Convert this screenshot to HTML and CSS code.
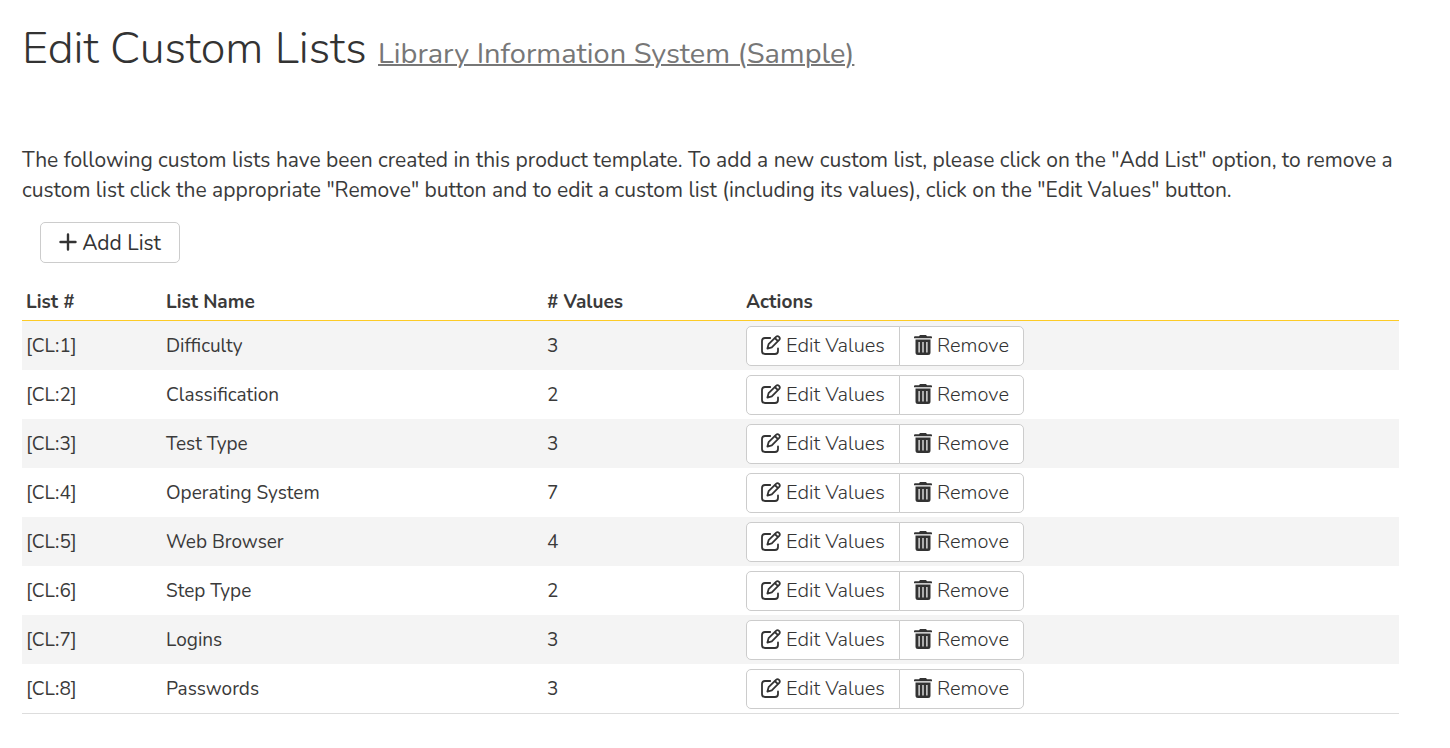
FILE: index.html
```html
<!DOCTYPE html>
<html lang="en">
<head>
<meta charset="utf-8">
<title>Edit Custom Lists</title>
<link rel="stylesheet" href="styles.css">
</head>
<body>
<svg class="sprite" aria-hidden="true">
  <symbol id="edit" viewBox="0 0 20 20"><path d="M9.200 3H4Q1 3 1 6V16Q1 19 4 19H14Q17 19 17 16V13.500" fill="none" stroke="currentColor" stroke-width="1.800" stroke-linecap="round"/><path d="M6.400 13.600 7.600 9.200 15 1.800Q16.500.4 18 1.800Q19.500 3.300 18.200 4.900L10.800 12.300ZM13.800 3 17 6.200" fill="none" stroke="currentColor" stroke-width="1.800" stroke-linejoin="round" stroke-linecap="round"/></symbol>
  <symbol id="trash" viewBox="0 0 18 20"><path fill="currentColor" fill-rule="evenodd" d="M6 0H12L13 1.200H17Q18 1.200 18 2.200V3.200H0V2.200Q0 1.200 1 1.200H5ZM1.500 4.600H16.500V17.500Q16.500 20 14 20H4Q1.500 20 1.500 17.500ZM4.500 7V17.500H5.700V7ZM8.400 7V17.500H9.600V7ZM12.300 7V17.500H13.500V7Z"/></symbol>
</svg>
<main class="page">
  <h1 class="title">Edit Custom Lists <small><a href="#">Library Information System (Sample)</a></small></h1>
  <p class="intro">The following custom lists have been created in this product template. To add a new custom list, please click on the "Add List" option, to remove a custom list click the appropriate "Remove" button and to edit a custom list (including its values), click on the "Edit Values" button.</p>
  <button class="btn add" type="button"><svg class="plus" viewBox="0 0 18 18" aria-hidden="true"><path d="M9 1.500V16.500M1.500 9H16.500" stroke="currentColor" stroke-width="2.400" stroke-linecap="round"/></svg>Add List</button>
  <table class="lists">
    <thead><tr><th class="c-id">List #</th><th class="c-name">List Name</th><th class="c-count"># Values</th><th>Actions</th></tr></thead>
    <tbody id="rows"></tbody>
  </table>
</main>
<script src="app.js"></script>
</body>
</html>
```
FILE: styles.css
```css
* { box-sizing: border-box; }
body { margin: 0; background: #fff; color: #3a3a3a; font: 21px/30px Nunito, "Open Sans", "Noto Sans", sans-serif; }
.sprite { display: none; }
.page { padding: 21px 51px 32px 22px; }
.title { margin: 0 0 63px; font-size: 45px; line-height: 56px; font-weight: 300; color: #333; }
.title small { font-size: 29px; font-weight: 400; }
.title a { color: #777; text-decoration-thickness: 2px; }
.intro { margin: 0 0 17px; }
.btn { display: inline-flex; align-items: center; justify-content: center; gap: 5px; height: 40px; border: 1px solid #ccc; border-radius: 5px; background: #fff; color: #333; font: inherit; white-space: nowrap; padding: 0; }
.add { margin: 0 0 21px 18px; width: 140px; height: 41px; }
.plus { width: 18px; height: 18px; margin-bottom: 2px; }
.lists { width: 100%; border-collapse: separate; border-spacing: 0; table-layout: fixed; font-size: 19px; line-height: 28px; }
.lists th { text-align: left; padding: 4px; font-weight: 700; border-bottom: 1px solid #fdcb26; }
.lists td { padding: 5px 4px 4px; }
.lists tbody tr:nth-child(odd) { background: #f4f4f4; }
.lists tbody tr:last-child td { border-bottom: 1px solid #ddd; }
.c-id { width: 140px; }
.c-name { width: 381px; }
.c-count { width: 199px; }
.group { display: flex; font-size: 20px; font-weight: 300; }
.edit { width: 154px; border-radius: 5px 0 0 5px; }
.remove { width: 125px; margin-left: -1px; border-radius: 0 5px 5px 0; }
.icon { width: 20px; height: 20px; margin-bottom: 2px; }
.remove .icon { width: 18px; }
```
FILE: app.js
```js
const lists = [["Difficulty",3],["Classification",2],["Test Type",3],["Operating System",7],["Web Browser",4],["Step Type",2],["Logins",3],["Passwords",3]];
document.getElementById("rows").innerHTML = lists.map(([name, count], i) => `<tr><td>[CL:${i + 1}]</td><td>${name}</td><td>${count}</td><td><div class="group"><button class="btn edit" type="button"><svg class="icon" aria-hidden="true"><use href="#edit"/></svg>Edit Values</button><button class="btn remove" type="button"><svg class="icon" aria-hidden="true"><use href="#trash"/></svg>Remove</button></div></td></tr>`).join("");
```
